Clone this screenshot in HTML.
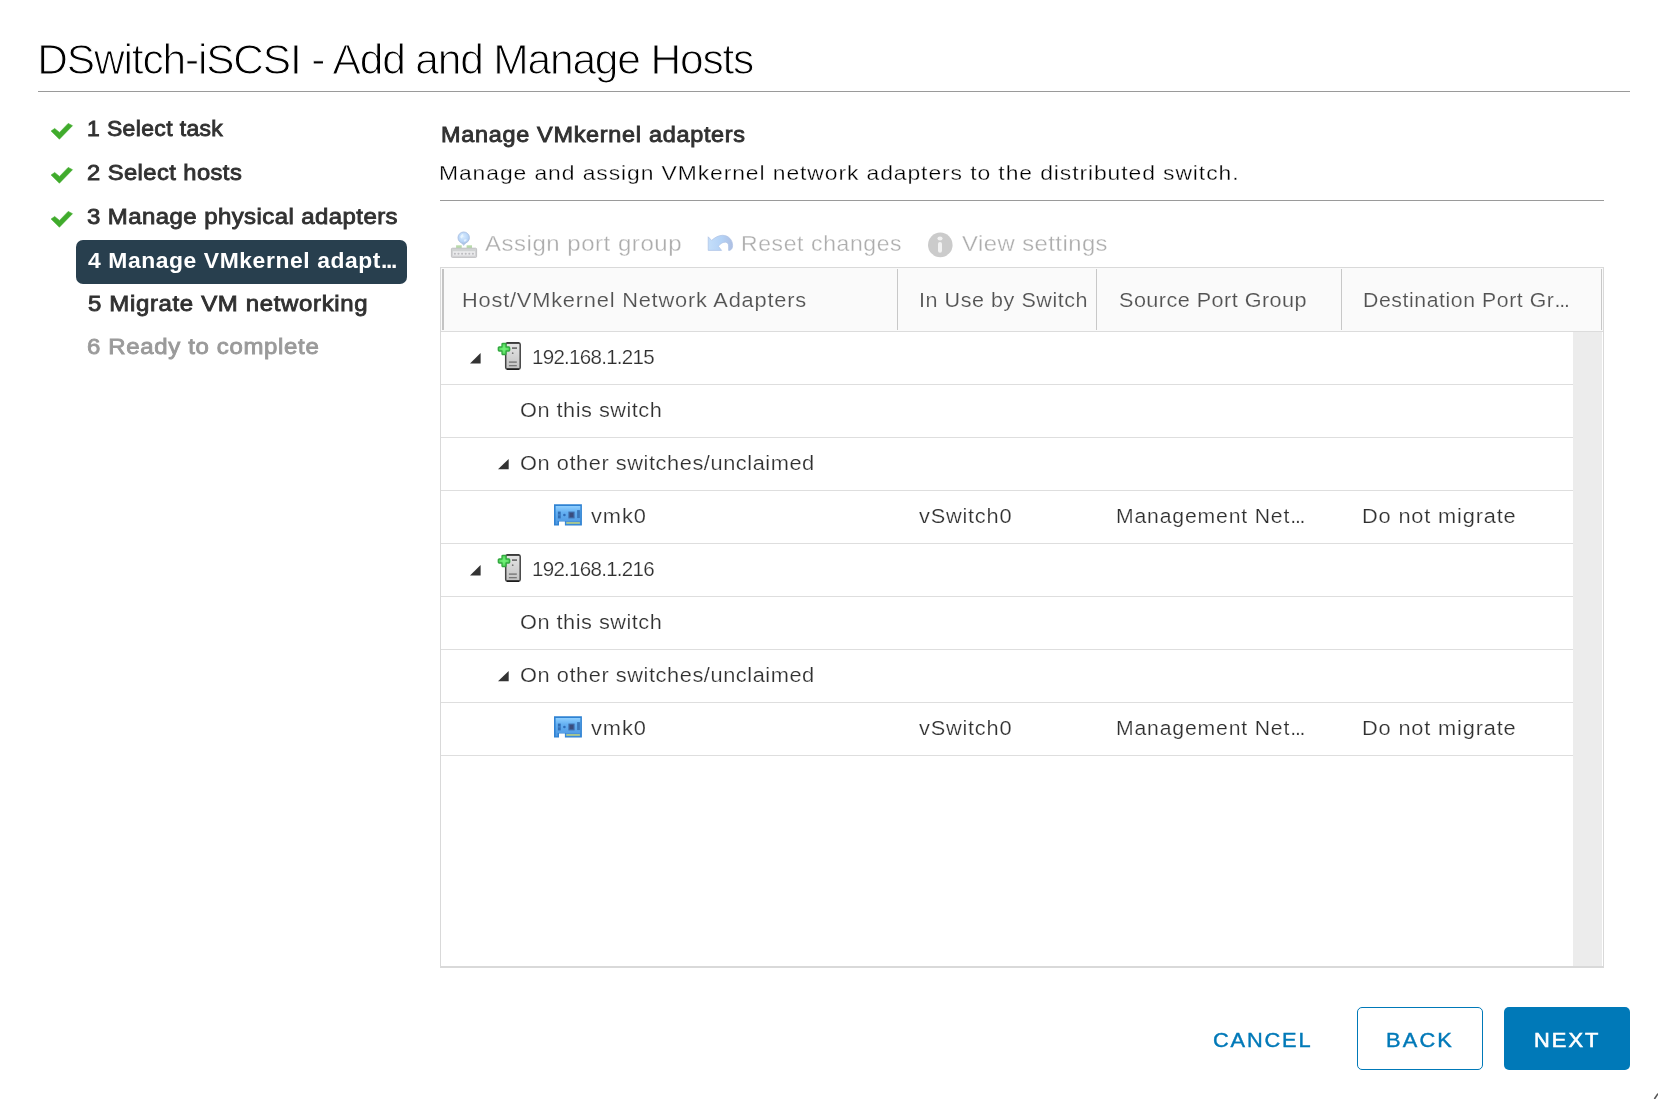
<!DOCTYPE html>
<html><head><meta charset="utf-8"><title>DSwitch-iSCSI - Add and Manage Hosts</title>
<style>
html,body{margin:0;padding:0;background:#fff;}
body{width:1658px;height:1099px;position:relative;overflow:hidden;font-family:"Liberation Sans", sans-serif;}
.t{position:absolute;white-space:pre;font-family:"Liberation Sans", sans-serif;}
.a{position:absolute;}
</style></head><body>
<!-- rules -->
<div class="a" style="left:38px;top:91px;width:1592px;height:1px;background:#9a9a9a"></div>
<div class="a" style="left:440px;top:200px;width:1164px;height:1px;background:#9a9a9a"></div>
<!-- active step -->
<div class="a" style="left:76px;top:240px;width:331px;height:44px;border-radius:7px;background:#283f4e"></div>
<!-- checks -->
<svg class="a" style="left:46px;top:116px" width="32" height="28" viewBox="46 116 32 28"><path d="M51.1 131 L54.7 128.5 L59.5 132.4 L68.2 123.4 L72.5 125.7 L59.4 139.2 Z" fill="#40ab2c" stroke="#40ab2c" stroke-width="0.6" stroke-linejoin="round"/></svg>
<svg class="a" style="left:46px;top:159.8px" width="32" height="28" viewBox="46 116 32 28"><path d="M51.1 131 L54.7 128.5 L59.5 132.4 L68.2 123.4 L72.5 125.7 L59.4 139.2 Z" fill="#40ab2c" stroke="#40ab2c" stroke-width="0.6" stroke-linejoin="round"/></svg>
<svg class="a" style="left:46px;top:203.6px" width="32" height="28" viewBox="46 116 32 28"><path d="M51.1 131 L54.7 128.5 L59.5 132.4 L68.2 123.4 L72.5 125.7 L59.4 139.2 Z" fill="#40ab2c" stroke="#40ab2c" stroke-width="0.6" stroke-linejoin="round"/></svg>
<!-- table -->
<div class="a" style="left:440px;top:267px;width:1164px;height:701px;box-sizing:border-box;border:1px solid #d9d9d9;border-bottom:2px solid #d9d9d9"></div>
<div class="a" style="left:441px;top:268px;width:1162px;height:63px;background:#fafafa"></div>
<div class="a" style="left:441px;top:331px;width:1162px;height:1px;background:#dcdcdc"></div>
<!-- col seps -->
<div class="a" style="left:442px;top:269px;width:2px;height:61px;background:#c4c4c4"></div>
<div class="a" style="left:897px;top:269px;width:1px;height:61px;background:#c8c8c8"></div>
<div class="a" style="left:1096px;top:269px;width:1px;height:61px;background:#c8c8c8"></div>
<div class="a" style="left:1341px;top:269px;width:1px;height:61px;background:#c8c8c8"></div>
<div class="a" style="left:1601px;top:269px;width:1px;height:61px;background:#c8c8c8"></div>
<!-- scrollbar -->
<div class="a" style="left:1573px;top:332px;width:29px;height:634px;background:#ececec"></div>
<!-- row lines -->
<div class="a" style="left:441px;top:384px;width:1132px;height:1px;background:#dedede"></div>
<div class="a" style="left:441px;top:437px;width:1132px;height:1px;background:#dedede"></div>
<div class="a" style="left:441px;top:490px;width:1132px;height:1px;background:#dedede"></div>
<div class="a" style="left:441px;top:543px;width:1132px;height:1px;background:#dedede"></div>
<div class="a" style="left:441px;top:596px;width:1132px;height:1px;background:#dedede"></div>
<div class="a" style="left:441px;top:649px;width:1132px;height:1px;background:#dedede"></div>
<div class="a" style="left:441px;top:702px;width:1132px;height:1px;background:#dedede"></div>
<div class="a" style="left:441px;top:755px;width:1132px;height:1px;background:#dedede"></div>
<!-- buttons -->
<div class="a" style="left:1357px;top:1007px;width:126px;height:63px;box-sizing:border-box;border:1px solid #0079b8;border-radius:5px;background:#fff"></div>
<div class="a" style="left:1504px;top:1007px;width:126px;height:63px;border-radius:5px;background:#0079b8"></div>
<!-- resize handle -->
<svg class="a" style="left:1648px;top:1089px" width="10" height="10" viewBox="0 0 10 10"><path d="M6.4 10 L10 4.6" stroke="#555" stroke-width="1.6" fill="none"/></svg>
<svg class="a" style="left:444px;top:226px" width="40" height="36" viewBox="444 226 40 36">
<defs>
<radialGradient id="gl" cx="0.45" cy="0.4" r="0.7"><stop offset="0" stop-color="#d8ebff"/><stop offset="0.6" stop-color="#b9d6f8"/><stop offset="1" stop-color="#aac0e2"/></radialGradient>
<linearGradient id="sw" x1="0" y1="0" x2="0" y2="1"><stop offset="0" stop-color="#cfd2d2"/><stop offset="1" stop-color="#d6d6d8"/></linearGradient>
</defs>
<path d="M461 242.4 L466.4 242.4 L463.7 245.9 Z" fill="#b4c8e6"/>
<circle cx="463.7" cy="237.7" r="5.7" fill="url(#gl)" stroke="#aabfe2" stroke-width="0.9"/>
<path d="M460.2 236.8 q0.8 -2.6 3.2 -3 q-0.6 1.6 0.2 2.6 q-1.6 0.2 -1.4 2 q-1.4 0.2 -2 -1.6z" fill="#e9f5ff" opacity="0.95"/>
<path d="M464.2 239.6 q1.4 -0.6 2.6 0 q-0.4 1.8 -2.2 2.2 q-1.2 -1 -0.4 -2.2z" fill="#e4f1ff" opacity="0.9"/>
<rect x="456.1" y="245.3" width="5.6" height="2.8" fill="#b9dbab"/>
<rect x="466.6" y="245.3" width="5.4" height="2.8" fill="#b9dbab"/>
<rect x="451.4" y="248.2" width="25.2" height="9.2" rx="1" fill="url(#sw)" stroke="#bcbcc0" stroke-width="0.9"/>
<rect x="453" y="251.2" width="22" height="4.4" fill="#eaeaec"/>
<g fill="#bbbbbf"><circle cx="454.9" cy="253.7" r="1.05"/><circle cx="458.5" cy="253.7" r="1.05"/><circle cx="462.1" cy="253.7" r="1.05"/><circle cx="465.7" cy="253.7" r="1.05"/><circle cx="469.3" cy="253.7" r="1.05"/><circle cx="472.9" cy="253.7" r="1.05"/></g>
</svg>
<svg class="a" style="left:700px;top:226px" width="40" height="36" viewBox="700 226 40 36">
<defs><linearGradient id="ra" x1="0" y1="0" x2="1" y2="0"><stop offset="0" stop-color="#c4defa"/><stop offset="0.55" stop-color="#b4d2f6"/><stop offset="1" stop-color="#aebfe2"/></linearGradient></defs>
<path d="M708.2 236.8 L708.2 250.4 L721.6 250.4 L718.4 246.3 C720.5 243 723.5 242 725.6 242.2 C727.7 242.6 728.6 244 728.6 246 L728.6 250.4 L729.6 250.4 C731.6 249.8 732.6 248 732.6 245.4 C732.6 240 728.5 235.3 722.5 235.3 C718.5 235.3 715 237.5 711.6 240.4 Z" fill="url(#ra)" stroke="#adc2e4" stroke-width="0.7" stroke-linejoin="round"/>
</svg>
<svg class="a" style="left:920px;top:226px" width="40" height="36" viewBox="920 226 40 36">
<circle cx="940.3" cy="244.9" r="12.3" fill="#cbcbcb"/>
<ellipse cx="940" cy="238.5" rx="2.6" ry="1.9" fill="#f2f2f2"/>
<rect x="938" y="242" width="4" height="10.8" rx="2" fill="#f2f2f2"/>
</svg>
<svg class="a" style="left:494px;top:338px" width="32" height="36" viewBox="494 338 32 36">
<defs><linearGradient id="sv1" x1="0" y1="0" x2="0" y2="1"><stop offset="0" stop-color="#e6e6e6"/><stop offset="1" stop-color="#c2c2c2"/></linearGradient>
<radialGradient id="gp1" cx="0.5" cy="0.5" r="0.6"><stop offset="0" stop-color="#74f27a"/><stop offset="0.55" stop-color="#5fe267"/><stop offset="1" stop-color="#2fa63b"/></radialGradient></defs>
<rect x="505.7" y="342.9" width="14.5" height="26.2" rx="1.6" fill="url(#sv1)" stroke="#444" stroke-width="1.5"/>
<rect x="506.4" y="342.3" width="13.1" height="1.3" rx="0.6" fill="#2a2a2a"/>
<rect x="506.6" y="368.4" width="12.7" height="1.5" rx="0.6" fill="#1c1c1c"/>
<rect x="512" y="347.3" width="5" height="1.6" fill="#666"/>
<circle cx="512.7" cy="353.2" r="0.85" fill="#777"/>
<rect x="508.9" y="361.4" width="7.9" height="1.4" fill="#777"/>
<rect x="508.9" y="365" width="7.9" height="1.3" fill="#777"/>
<path d="M502.9 343.3 h2.2 a0.9 0.9 0 0 1 0.9 0.9 v2.8 h2.8 a0.9 0.9 0 0 1 0.9 0.9 v2.2 a0.9 0.9 0 0 1 -0.9 0.9 h-2.8 v2.8 a0.9 0.9 0 0 1 -0.9 0.9 h-2.2 a0.9 0.9 0 0 1 -0.9 -0.9 v-2.8 h-2.8 a0.9 0.9 0 0 1 -0.9 -0.9 v-2.2 a0.9 0.9 0 0 1 0.9 -0.9 h2.8 v-2.8 a0.9 0.9 0 0 1 0.9 -0.9z" fill="url(#gp1)" stroke="#32a83f" stroke-width="1.3" stroke-linejoin="round"/>
</svg>
<svg class="a" style="left:494px;top:550px" width="32" height="36" viewBox="494 338 32 36">
<defs><linearGradient id="sv2" x1="0" y1="0" x2="0" y2="1"><stop offset="0" stop-color="#e6e6e6"/><stop offset="1" stop-color="#c2c2c2"/></linearGradient>
<radialGradient id="gp2" cx="0.5" cy="0.5" r="0.6"><stop offset="0" stop-color="#74f27a"/><stop offset="0.55" stop-color="#5fe267"/><stop offset="1" stop-color="#2fa63b"/></radialGradient></defs>
<rect x="505.7" y="342.9" width="14.5" height="26.2" rx="1.6" fill="url(#sv2)" stroke="#444" stroke-width="1.5"/>
<rect x="506.4" y="342.3" width="13.1" height="1.3" rx="0.6" fill="#2a2a2a"/>
<rect x="506.6" y="368.4" width="12.7" height="1.5" rx="0.6" fill="#1c1c1c"/>
<rect x="512" y="347.3" width="5" height="1.6" fill="#666"/>
<circle cx="512.7" cy="353.2" r="0.85" fill="#777"/>
<rect x="508.9" y="361.4" width="7.9" height="1.4" fill="#777"/>
<rect x="508.9" y="365" width="7.9" height="1.3" fill="#777"/>
<path d="M502.9 343.3 h2.2 a0.9 0.9 0 0 1 0.9 0.9 v2.8 h2.8 a0.9 0.9 0 0 1 0.9 0.9 v2.2 a0.9 0.9 0 0 1 -0.9 0.9 h-2.8 v2.8 a0.9 0.9 0 0 1 -0.9 0.9 h-2.2 a0.9 0.9 0 0 1 -0.9 -0.9 v-2.8 h-2.8 a0.9 0.9 0 0 1 -0.9 -0.9 v-2.2 a0.9 0.9 0 0 1 0.9 -0.9 h2.8 v-2.8 a0.9 0.9 0 0 1 0.9 -0.9z" fill="url(#gp2)" stroke="#32a83f" stroke-width="1.3" stroke-linejoin="round"/>
</svg>
<svg class="a" style="left:548px;top:498px" width="40" height="34" viewBox="548 498 40 34">
<defs><linearGradient id="nc1" x1="0" y1="0" x2="0" y2="1"><stop offset="0" stop-color="#8fcfff"/><stop offset="0.35" stop-color="#64b0f2"/><stop offset="1" stop-color="#4e98e2"/></linearGradient></defs>
<path d="M554 504.2 H581.9 V525.6 H564.9 V521.5 H559 V525.6 H554 Z" fill="#2f82d2"/>
<path d="M555.6 506 H580.4 V521 H566 V521 H557.6 V524.2 H555.6 Z" fill="url(#nc1)"/>
<rect x="565.6" y="521" width="14.8" height="3.4" fill="#4a93dc"/>
<rect x="566.3" y="522" width="13.6" height="1.9" fill="#a8c690"/>
<rect x="557.9" y="511.6" width="2.8" height="6.8" fill="#2f6db4"/>
<rect x="557.9" y="514.4" width="2.8" height="1" fill="#4a8bd2"/>
<circle cx="564.4" cy="515" r="1.3" fill="#2f6cb8"/>
<rect x="568.4" y="511.6" width="6.2" height="6.8" fill="#3f6ba8"/>
<rect x="569.6" y="512.8" width="3.8" height="4.4" fill="#3a4c7c"/>
<rect x="577.1" y="510.1" width="2.8" height="8" fill="#3a76b8"/>
</svg>
<svg class="a" style="left:548px;top:710px" width="40" height="34" viewBox="548 498 40 34">
<defs><linearGradient id="nc2" x1="0" y1="0" x2="0" y2="1"><stop offset="0" stop-color="#8fcfff"/><stop offset="0.35" stop-color="#64b0f2"/><stop offset="1" stop-color="#4e98e2"/></linearGradient></defs>
<path d="M554 504.2 H581.9 V525.6 H564.9 V521.5 H559 V525.6 H554 Z" fill="#2f82d2"/>
<path d="M555.6 506 H580.4 V521 H566 V521 H557.6 V524.2 H555.6 Z" fill="url(#nc2)"/>
<rect x="565.6" y="521" width="14.8" height="3.4" fill="#4a93dc"/>
<rect x="566.3" y="522" width="13.6" height="1.9" fill="#a8c690"/>
<rect x="557.9" y="511.6" width="2.8" height="6.8" fill="#2f6db4"/>
<rect x="557.9" y="514.4" width="2.8" height="1" fill="#4a8bd2"/>
<circle cx="564.4" cy="515" r="1.3" fill="#2f6cb8"/>
<rect x="568.4" y="511.6" width="6.2" height="6.8" fill="#3f6ba8"/>
<rect x="569.6" y="512.8" width="3.8" height="4.4" fill="#3a4c7c"/>
<rect x="577.1" y="510.1" width="2.8" height="8" fill="#3a76b8"/>
</svg>
<svg class="a" style="left:468px;top:350.5px" width="14.600000000000023" height="14.5" viewBox="468 350.5 14.600000000000023 14.5"><path d="M470 363 L480.6 363 L480.6 352.5 Z" fill="#333"/></svg>
<svg class="a" style="left:496.2px;top:456.8px" width="14.699999999999989" height="14.199999999999989" viewBox="496.2 456.8 14.699999999999989 14.199999999999989"><path d="M498.2 469 L508.9 469 L508.9 458.8 Z" fill="#333"/></svg>
<svg class="a" style="left:468px;top:562.5px" width="14.600000000000023" height="14.5" viewBox="468 562.5 14.600000000000023 14.5"><path d="M470 575 L480.6 575 L480.6 564.5 Z" fill="#333"/></svg>
<svg class="a" style="left:496.2px;top:668.8px" width="14.699999999999989" height="14.200000000000045" viewBox="496.2 668.8 14.699999999999989 14.200000000000045"><path d="M498.2 681 L508.9 681 L508.9 670.8 Z" fill="#333"/></svg>
<div id="txt" style="position:absolute;left:0;top:0;width:1658px;height:1099px;will-change:transform">
<span class="t" id="t0" style="left:37.29px;top:39.02px;font-size:42.5px;line-height:42.5px;font-weight:400;color:#000;letter-spacing:-1.177px;transform:scaleX(1.0000);transform-origin:0 0;-webkit-text-stroke:1.05px #fff;">DSwitch-iSCSI - Add and Manage Hosts</span>
<span class="t" id="t1" style="left:86.86px;top:118.18px;font-size:22px;line-height:22px;font-weight:400;color:#313131;letter-spacing:0.366px;transform:scaleX(1.0420);transform-origin:0 0;-webkit-text-stroke:0.85px #313131;">1 Select task</span>
<span class="t" id="t2" style="left:87.09px;top:161.98px;font-size:22px;line-height:22px;font-weight:400;color:#313131;letter-spacing:0.411px;transform:scaleX(1.0782);transform-origin:0 0;-webkit-text-stroke:0.85px #313131;">2 Select hosts</span>
<span class="t" id="t3" style="left:87.02px;top:205.98px;font-size:22px;line-height:22px;font-weight:400;color:#313131;letter-spacing:0.389px;transform:scaleX(1.0900);transform-origin:0 0;-webkit-text-stroke:0.85px #313131;">3 Manage physical adapters</span>
<span class="t" id="t4" style="left:87.84px;top:250.38px;font-size:22px;line-height:22px;font-weight:700;color:#fff;letter-spacing:0.559px;transform:scaleX(1.0398);transform-origin:0 0;">4 Manage VMkernel adapt<span style="letter-spacing:-1.3px">..</span>.</span>
<span class="t" id="t5" style="left:87.84px;top:293.28px;font-size:22px;line-height:22px;font-weight:400;color:#313131;letter-spacing:0.600px;transform:scaleX(1.0900);transform-origin:0 0;-webkit-text-stroke:0.85px #313131;">5 Migrate VM networking</span>
<span class="t" id="t6" style="left:86.58px;top:335.78px;font-size:22px;line-height:22px;font-weight:400;color:#9a9a9a;letter-spacing:0.601px;transform:scaleX(1.0900);transform-origin:0 0;-webkit-text-stroke:0.85px #9a9a9a;">6 Ready to complete</span>
<span class="t" id="t7" style="left:440.68px;top:124.70px;font-size:21.5px;line-height:21.5px;font-weight:400;color:#313131;letter-spacing:0.645px;transform:scaleX(1.0900);transform-origin:0 0;-webkit-text-stroke:0.85px #313131;">Manage VMkernel adapters</span>
<span class="t" id="t8" style="left:439.30px;top:161.92px;font-size:21px;line-height:21px;font-weight:400;color:#000;letter-spacing:0.835px;transform:scaleX(1.0900);transform-origin:0 0;-webkit-text-stroke:0.3px #fff;">Manage and assign VMkernel network adapters to the distributed switch.</span>
<span class="t" id="t9" style="left:485.43px;top:233.48px;font-size:22px;line-height:22px;font-weight:400;color:#adadad;letter-spacing:0.488px;transform:scaleX(1.0900);transform-origin:0 0;-webkit-text-stroke:0.3px #fff;">Assign port group</span>
<span class="t" id="t10" style="left:740.64px;top:233.48px;font-size:22px;line-height:22px;font-weight:400;color:#adadad;letter-spacing:0.600px;transform:scaleX(1.0429);transform-origin:0 0;-webkit-text-stroke:0.3px #fff;">Reset changes</span>
<span class="t" id="t11" style="left:961.51px;top:233.48px;font-size:22px;line-height:22px;font-weight:400;color:#adadad;letter-spacing:0.428px;transform:scaleX(1.0832);transform-origin:0 0;-webkit-text-stroke:0.3px #fff;">View settings</span>
<span class="t" id="t12" style="left:461.66px;top:289.97px;font-size:20px;line-height:20px;font-weight:400;color:#525252;letter-spacing:0.729px;transform:scaleX(1.0900);transform-origin:0 0;-webkit-text-stroke:0.15px #fafafa;">Host/VMkernel Network Adapters</span>
<span class="t" id="t13" style="left:918.70px;top:289.97px;font-size:20px;line-height:20px;font-weight:400;color:#525252;letter-spacing:0.519px;transform:scaleX(1.0752);transform-origin:0 0;-webkit-text-stroke:0.15px #fafafa;">In Use by Switch</span>
<span class="t" id="t14" style="left:1118.64px;top:289.97px;font-size:20px;line-height:20px;font-weight:400;color:#525252;letter-spacing:0.419px;transform:scaleX(1.0814);transform-origin:0 0;-webkit-text-stroke:0.15px #fafafa;">Source Port Group</span>
<span class="t" id="t15" style="left:1363.44px;top:289.97px;font-size:20px;line-height:20px;font-weight:400;color:#525252;letter-spacing:0.540px;transform:scaleX(1.0618);transform-origin:0 0;-webkit-text-stroke:0.15px #fafafa;">Destination Port Gr<span style="letter-spacing:-1.1px">..</span>.</span>
<span class="t" id="t16" style="left:532.05px;top:346.65px;font-size:20.5px;line-height:20.5px;font-weight:400;color:#303030;letter-spacing:-0.710px;transform:scaleX(1.0000);transform-origin:0 0;-webkit-text-stroke:0.2px #fff;">192.168.1.215</span>
<span class="t" id="t17" style="left:519.52px;top:399.77px;font-size:20px;line-height:20px;font-weight:400;color:#303030;letter-spacing:0.472px;transform:scaleX(1.0854);transform-origin:0 0;-webkit-text-stroke:0.2px #fff;">On this switch</span>
<span class="t" id="t18" style="left:519.52px;top:452.67px;font-size:20px;line-height:20px;font-weight:400;color:#303030;letter-spacing:0.506px;transform:scaleX(1.0900);transform-origin:0 0;-webkit-text-stroke:0.2px #fff;">On other switches/unclaimed</span>
<span class="t" id="t19" style="left:590.51px;top:505.97px;font-size:20px;line-height:20px;font-weight:400;color:#303030;letter-spacing:0.885px;transform:scaleX(1.0900);transform-origin:0 0;-webkit-text-stroke:0.2px #fff;">vmk0</span>
<span class="t" id="t20" style="left:918.69px;top:505.97px;font-size:20px;line-height:20px;font-weight:400;color:#303030;letter-spacing:0.693px;transform:scaleX(1.0900);transform-origin:0 0;-webkit-text-stroke:0.2px #fff;">vSwitch0</span>
<span class="t" id="t21" style="left:1116.36px;top:505.97px;font-size:20px;line-height:20px;font-weight:400;color:#303030;letter-spacing:0.781px;transform:scaleX(1.0596);transform-origin:0 0;-webkit-text-stroke:0.2px #fff;">Management Net<span style="letter-spacing:-1.1px">..</span>.</span>
<span class="t" id="t22" style="left:1361.58px;top:505.97px;font-size:20px;line-height:20px;font-weight:400;color:#303030;letter-spacing:0.758px;transform:scaleX(1.0900);transform-origin:0 0;-webkit-text-stroke:0.2px #fff;">Do not migrate</span>
<span class="t" id="t23" style="left:532.05px;top:558.65px;font-size:20.5px;line-height:20.5px;font-weight:400;color:#303030;letter-spacing:-0.713px;transform:scaleX(1.0000);transform-origin:0 0;-webkit-text-stroke:0.2px #fff;">192.168.1.216</span>
<span class="t" id="t24" style="left:519.52px;top:611.77px;font-size:20px;line-height:20px;font-weight:400;color:#303030;letter-spacing:0.472px;transform:scaleX(1.0854);transform-origin:0 0;-webkit-text-stroke:0.2px #fff;">On this switch</span>
<span class="t" id="t25" style="left:519.52px;top:664.67px;font-size:20px;line-height:20px;font-weight:400;color:#303030;letter-spacing:0.506px;transform:scaleX(1.0900);transform-origin:0 0;-webkit-text-stroke:0.2px #fff;">On other switches/unclaimed</span>
<span class="t" id="t26" style="left:590.51px;top:717.97px;font-size:20px;line-height:20px;font-weight:400;color:#303030;letter-spacing:0.885px;transform:scaleX(1.0900);transform-origin:0 0;-webkit-text-stroke:0.2px #fff;">vmk0</span>
<span class="t" id="t27" style="left:918.69px;top:717.97px;font-size:20px;line-height:20px;font-weight:400;color:#303030;letter-spacing:0.693px;transform:scaleX(1.0900);transform-origin:0 0;-webkit-text-stroke:0.2px #fff;">vSwitch0</span>
<span class="t" id="t28" style="left:1116.36px;top:717.97px;font-size:20px;line-height:20px;font-weight:400;color:#303030;letter-spacing:0.781px;transform:scaleX(1.0596);transform-origin:0 0;-webkit-text-stroke:0.2px #fff;">Management Net<span style="letter-spacing:-1.1px">..</span>.</span>
<span class="t" id="t29" style="left:1361.58px;top:717.97px;font-size:20px;line-height:20px;font-weight:400;color:#303030;letter-spacing:0.758px;transform:scaleX(1.0900);transform-origin:0 0;-webkit-text-stroke:0.2px #fff;">Do not migrate</span>
<span class="t" id="t30" style="left:1212.90px;top:1029.97px;font-size:20px;line-height:20px;font-weight:400;color:#0079b8;letter-spacing:1.684px;transform:scaleX(1.0900);transform-origin:0 0;-webkit-text-stroke:0.4px #0079b8;">CANCEL</span>
<span class="t" id="t31" style="left:1386.26px;top:1029.97px;font-size:20px;line-height:20px;font-weight:400;color:#0079b8;letter-spacing:1.985px;transform:scaleX(1.0900);transform-origin:0 0;-webkit-text-stroke:0.4px #0079b8;">BACK</span>
<span class="t" id="t32" style="left:1533.86px;top:1029.97px;font-size:20px;line-height:20px;font-weight:400;color:#fff;letter-spacing:1.902px;transform:scaleX(1.0900);transform-origin:0 0;-webkit-text-stroke:0.6px #fff;">NEXT</span>
</div>
</body></html>
